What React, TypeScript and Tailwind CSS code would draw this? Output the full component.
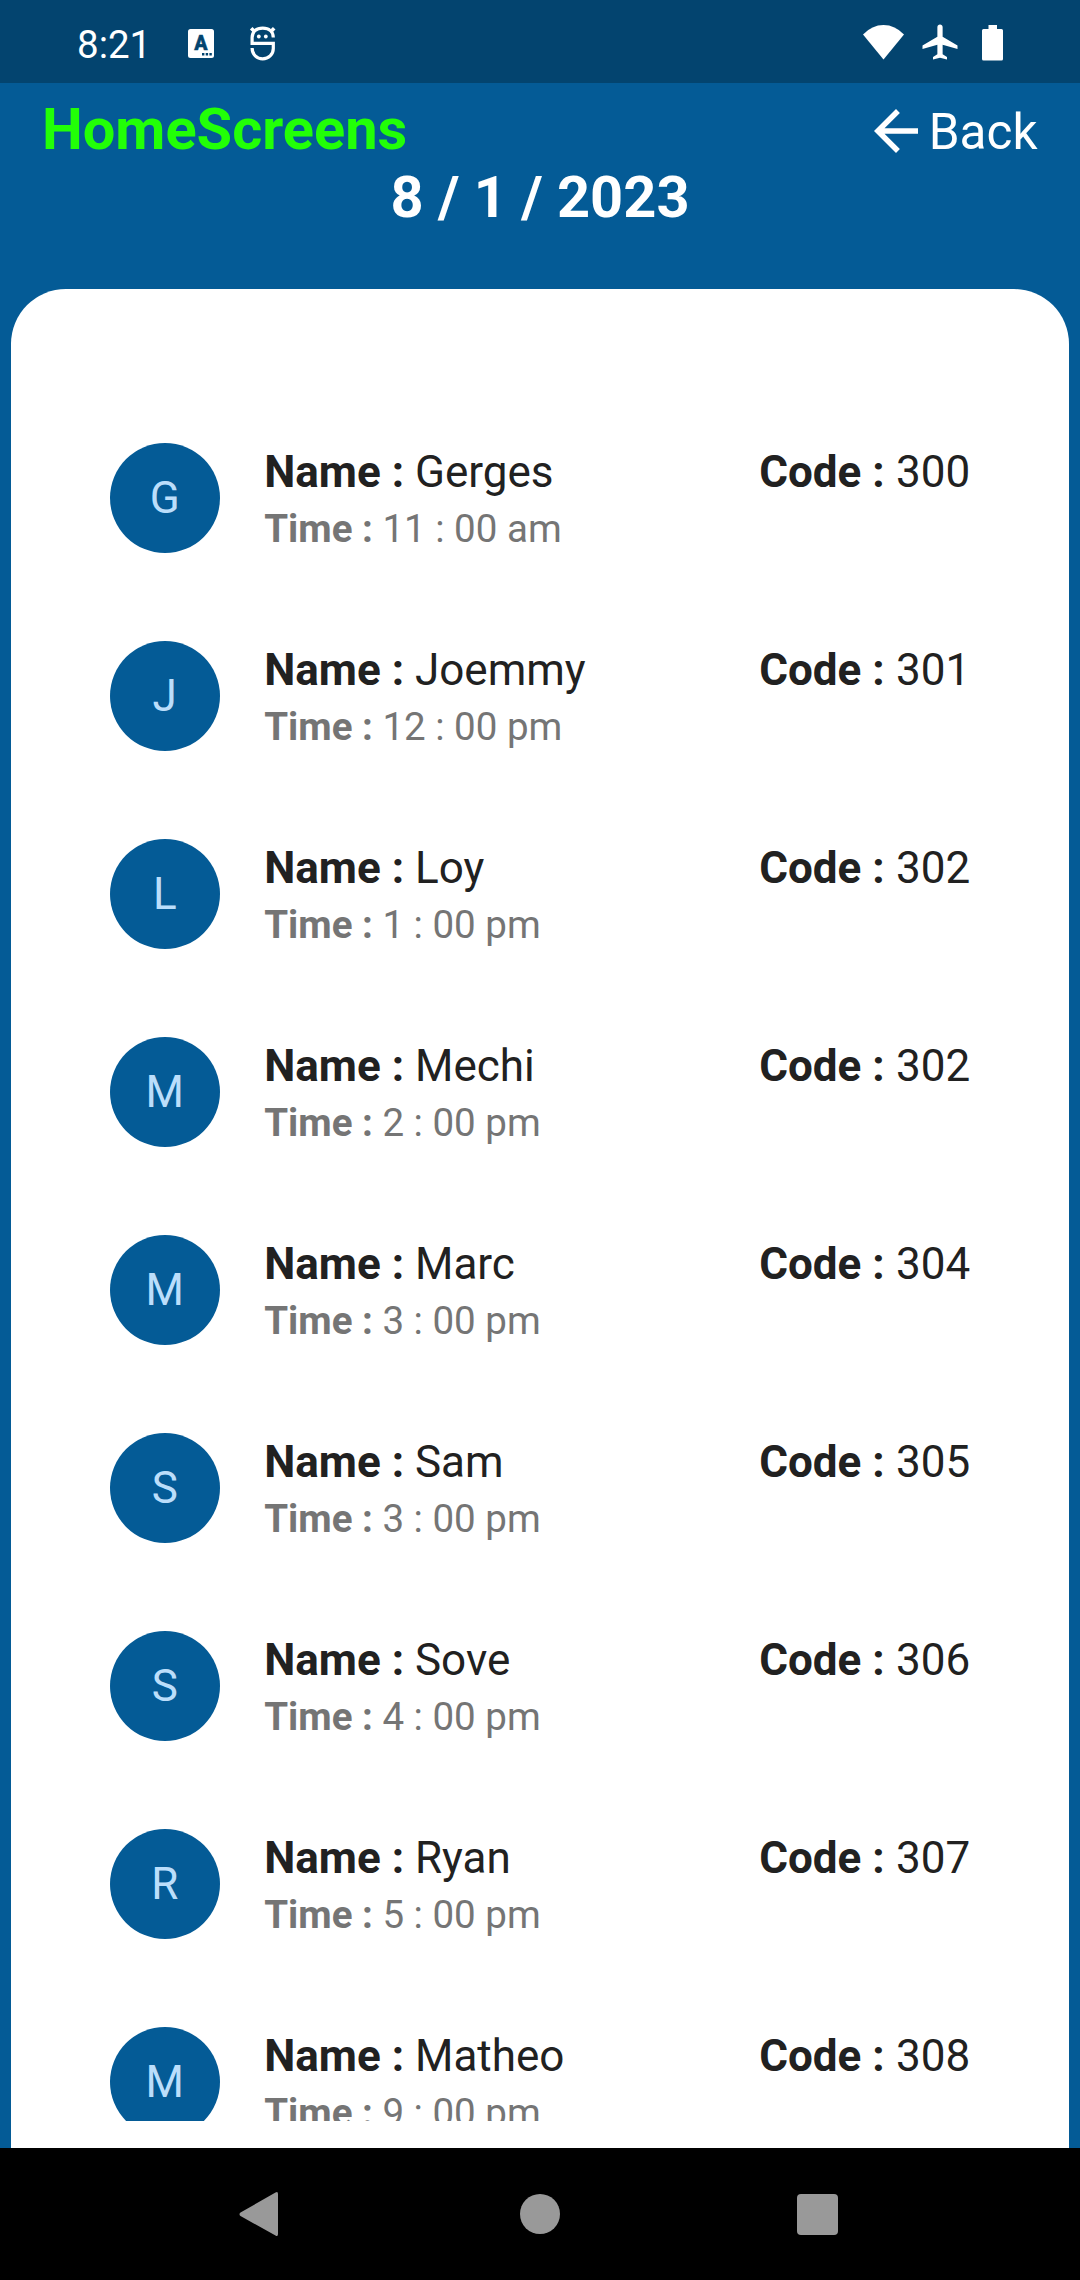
const people = [
  { initial: 'G', name: 'Gerges', time: '11 : 00 am', code: '300' },
  { initial: 'J', name: 'Joemmy', time: '12 : 00 pm', code: '301' },
  { initial: 'L', name: 'Loy', time: '1 : 00 pm', code: '302' },
  { initial: 'M', name: 'Mechi', time: '2 : 00 pm', code: '302' },
  { initial: 'M', name: 'Marc', time: '3 : 00 pm', code: '304' },
  { initial: 'S', name: 'Sam', time: '3 : 00 pm', code: '305' },
  { initial: 'S', name: 'Sove', time: '4 : 00 pm', code: '306' },
  { initial: 'R', name: 'Ryan', time: '5 : 00 pm', code: '307' },
  { initial: 'M', name: 'Matheo', time: '9 : 00 pm', code: '308' },
];

function StatusBar() {
  return (
    <div className="flex h-[83px] shrink-0 items-start bg-[#03446f] text-white">
      <div className="ml-[77px] mt-[22px] w-[111px] text-[38.5px] leading-[46px]">8:21</div>
      <svg className="mt-[29px] h-[29px] w-[26px]" viewBox="0 0 26 29">
        <rect width="26" height="29" rx="2.5" fill="#fff" />
        <text x="13" y="20.8" textAnchor="middle" fontSize="19.5" fontWeight="900" fill="#03446f" stroke="#03446f" strokeWidth="0.4">A</text>
        <path d="M14 24h2.4v2.4H14zM17.7 24h2.4v2.4h-2.4zM21.4 24h2.4v2.4h-2.4z" fill="#03446f" />
      </svg>
      <svg className="ml-[35px] mt-[25px] h-[37px] w-[28px]" viewBox="0 0 28 37" fill="none" stroke="#fff" strokeWidth="3.2">
        <path d="M24.3 12.5C24.3 6.5 20 3.2 13.7 3.2S3.1 6.500 3.1 12.500V18.300H24.300V23.500C24.300 29.500 19.500 33.800 13.700 33.800S3.100 29.500 3.100 23" />
        <path d="M2.200 3.200L6 7M25.200 3.200L21.400 7" strokeWidth="3.600" />
        <circle cx="9.800" cy="11.500" r="1.900" fill="#fff" stroke="none" />
        <circle cx="16.800" cy="11.500" r="1.900" fill="#fff" stroke="none" />
      </svg>
      <svg className="ml-[586px] mt-[25px] h-[35px] w-[42px]" viewBox="0 0 42 35">
        <path d="M0 9.500Q9 0 20.500 0T41 9.500L20.500 34.500Z" fill="#fff" />
      </svg>
      <svg className="ml-[14px] mt-[21px] h-[42px] w-[42px]" viewBox="0 0 24 24">
        <path d="M22 16v-2l-8.500-5V3.500c0-.83-.67-1.500-1.500-1.500s-1.500.67-1.500 1.500V9L2 14v2l8.500-2.500V19L8 20.500V22l4-1 4 1v-1.500L13.500 19v-5.500L22 16z" fill="#fff" />
      </svg>
      <svg className="ml-[21px] mt-[25px] h-[36px] w-[22px]" viewBox="0 0 22 36">
        <path d="M6.500 0h8.500v4h4.500q1.500 0 1.500 1.500v28.500q0 1.500-1.500 1.500h-18q-1.500 0-1.500-1.500V5.500Q0 4 1.500 4h5z" fill="#fff" />
      </svg>
    </div>
  );
}

function Header() {
  return (
    <header className="flex h-[205.750px] shrink-0 flex-col pt-[12px] text-white">
      <div className="flex h-[68px] items-center justify-between pl-[42px] pr-[42.500px]">
        <h1 className="text-[57.750px] font-bold leading-[68px] text-[#22ff07]">HomeScreens</h1>
        <button className="flex items-center">
          <svg className="mt-1 h-[66px] w-[66px]" viewBox="0 0 24 24" fill="currentColor">
            <path d="M20 11H7.830l5.590-5.590L12 4l-8 8 8 8 1.410-1.410L7.830 13H20v-2z" />
          </svg>
          <span className="mt-[6px] text-[49.500px] leading-[58px]">Back</span>
        </button>
      </div>
      <div className="text-center text-[57.750px] font-bold leading-[68px]">8 / 1 / 2023</div>
    </header>
  );
}

function Row({ person }: { person: (typeof people)[number] }) {
  return (
    <li className="flex h-[198px] items-start pl-[99px] pr-[99px]">
      <div className="flex h-[110px] w-[110px] shrink-0 items-center justify-center rounded-full bg-[#045b96] text-[44px] leading-[52px] text-[#bbdefb]">
        {person.initial}
      </div>
      <div className="ml-[44.500px] mt-[3px] flex-1">
        <div className="text-[44px] leading-[52px] text-[#212121]">
          <b>Name : </b>{person.name}
        </div>
        <div className="mt-[8px] text-[38.500px] leading-[46px] text-[#757575]">
          <b>Time : </b>{person.time}
        </div>
      </div>
      <div className="mt-[3px] text-[44px] leading-[52px] text-[#212121]">
        <b className="mr-[0.500px]">Code : </b>{person.code}
      </div>
    </li>
  );
}

function NavBar() {
  return (
    <nav className="flex h-[132px] shrink-0 items-center bg-black">
      <svg className="ml-[239px] h-[62px] w-[40px]" viewBox="0 0 40 62" fill="#999">
        <path d="M36.500 9.500Q39 8 39 11V51Q39 54 36.500 52.500L1.500 33Q-.5 31 1.500 29.500Z" />
      </svg>
      <div className="ml-[241px] h-[40px] w-[40px] rounded-full bg-[#999]" />
      <div className="ml-[237px] h-[41px] w-[41px] rounded-[4px] bg-[#999]" />
    </nav>
  );
}

export default function App() {
  return (
    <div className="flex h-[2280px] w-[1080px] flex-col overflow-hidden bg-[#045b96] font-['Roboto',sans-serif]">
      <StatusBar />
      <Header />
      <main className="mx-[10.750px] min-h-0 flex-1 rounded-t-[55px] bg-white pt-[154.250px]">
        <ul className="h-[1678px] overflow-hidden">
          {people.map((person) => (
            <Row key={person.name} person={person} />
          ))}
        </ul>
      </main>
      <NavBar />
    </div>
  );
}
